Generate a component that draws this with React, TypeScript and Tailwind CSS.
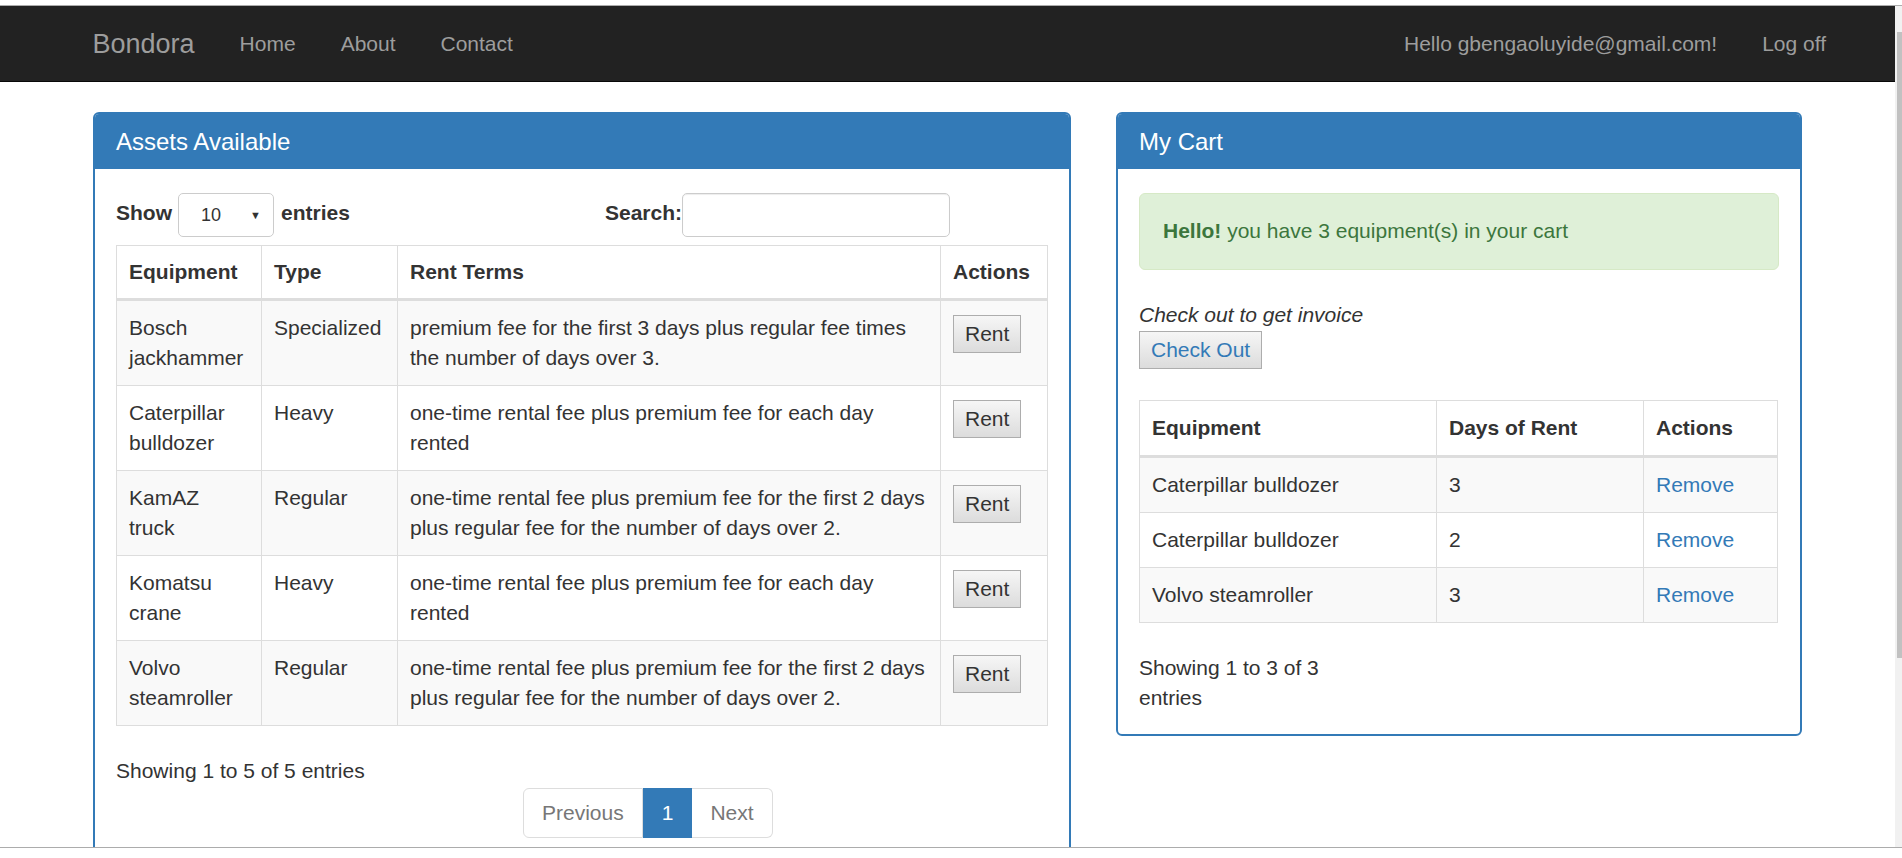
import React from 'react';

const assets = [
  { name: 'Bosch jackhammer', type: 'Specialized', terms: 'premium fee for the first 3 days plus regular fee times the number of days over 3.' },
  { name: 'Caterpillar bulldozer', type: 'Heavy', terms: 'one-time rental fee plus premium fee for each day rented' },
  { name: 'KamAZ truck', type: 'Regular', terms: 'one-time rental fee plus premium fee for the first 2 days plus regular fee for the number of days over 2.' },
  { name: 'Komatsu crane', type: 'Heavy', terms: 'one-time rental fee plus premium fee for each day rented' },
  { name: 'Volvo steamroller', type: 'Regular', terms: 'one-time rental fee plus premium fee for the first 2 days plus regular fee for the number of days over 2.' },
];

const cart = [
  { name: 'Caterpillar bulldozer', days: 3 },
  { name: 'Caterpillar bulldozer', days: 2 },
  { name: 'Volvo steamroller', days: 3 },
];

const Navbar = () => (
  <nav className="h-[76px] shrink-0 bg-[#222] border-b border-[#080808] flex items-center justify-between pl-[70px] pr-[46.5px] text-[#9d9d9d]">
    <div className="flex items-center">
      <a className="px-[22.5px] text-[27px] leading-[30px]">Bondora</a>
      {['Home', 'About', 'Contact'].map((l) => (
        <a key={l} className="px-[22.5px] text-[21px] leading-[30px]">{l}</a>
      ))}
    </div>
    <div className="flex items-center text-[21px] leading-[30px]">
      <a className="px-[22.5px]">Hello gbengaoluyide@gmail.com!</a>
      <a className="px-[22.5px]">Log off</a>
    </div>
  </nav>
);

const Panel = ({ title, width, children }: { title: string; width: string; children: React.ReactNode }) => (
  <div className={`${width} shrink-0 self-start rounded-[6px] border-2 border-[#337ab7] bg-white overflow-hidden`}>
    <div className="h-[55px] bg-[#337ab7] px-[21px] flex items-center text-white text-[24px] leading-[26px]">{title}</div>
    <div className="px-[21px] pt-[24px] pb-[21px]">{children}</div>
  </div>
);

const NativeButton = ({ label, className = '' }: { label: string; className?: string }) => (
  <button className={`h-[38px] px-[11px] border border-[#adadad] bg-gradient-to-b from-[#f6f6f6] to-[#dcdcdc] text-[21px] leading-[30px] ${className}`}>
    {label}
  </button>
);

const AssetsPanel = () => (
  <Panel title="Assets Available" width="w-[978px]">
    <div className="flex h-[44px] items-center font-bold">
      <div className="w-[489px] flex items-center">
        <span className="mb-[4px]">Show</span>
        <div className="ml-[6px] mr-[7px] w-[96px] h-[44px] rounded-[5px] border border-[#ccc] bg-white flex items-center justify-between pl-[22px] pr-[12px] font-normal text-[18px] text-[#333]">
          <span>10</span>
          <span className="text-[11px]">▼</span>
        </div>
        <span className="mb-[4px]">entries</span>
      </div>
      <span className="mb-[4px]">Search:</span>
      <div className="w-[268px] h-[44px] rounded-[5px] border border-[#ccc] shadow-[inset_0_1px_1px_rgba(0,0,0,0.075)] bg-white" />
    </div>

    <table className="mt-[8px] w-[931px] table-fixed">
      <colgroup>
        <col className="w-[145px]" />
        <col className="w-[136px]" />
        <col className="w-[543px]" />
        <col className="w-[107px]" />
      </colgroup>
      <thead>
        <tr>
          {['Equipment', 'Type', 'Rent Terms', 'Actions'].map((h) => (
            <th key={h} className="border border-[#ddd] border-b-[3px] px-[12px] py-[11px] text-left font-bold">{h}</th>
          ))}
        </tr>
      </thead>
      <tbody>
        {assets.map((a, i) => (
          <tr key={a.name} className={i % 2 === 0 ? 'bg-[#f9f9f9]' : 'bg-white'}>
            <td className="border border-[#ddd] px-[12px] py-[12px] align-top">{a.name}</td>
            <td className="border border-[#ddd] px-[12px] py-[12px] align-top">{a.type}</td>
            <td className="border border-[#ddd] px-[12px] py-[12px] align-top">{a.terms}</td>
            <td className="border border-[#ddd] px-[12px] pt-[14px] pb-[10px] align-top">
              <NativeButton label="Rent" className="text-[#333]" />
            </td>
          </tr>
        ))}
      </tbody>
    </table>

    <div className="mt-[30px]">Showing 1 to 5 of 5 entries</div>
    <div className="mt-[2px] ml-[407px] flex h-[50px]">
      <span className="px-[18px] py-[9px] border border-[#ddd] rounded-l-[6px] text-[#777] bg-white">Previous</span>
      <span className="px-[18px] py-[9px] border border-[#337ab7] bg-[#337ab7] text-white">1</span>
      <span className="px-[18px] py-[9px] border border-[#ddd] border-l-0 rounded-r-[6px] text-[#777] bg-white">Next</span>
    </div>
    <div className="h-[10px]" />
  </Panel>
);

const CartPanel = () => (
  <Panel title="My Cart" width="w-[686px]">
    <div className="rounded-[6px] border border-[#d6e9c6] bg-[#dff0d8] text-[#3c763d] px-[23px] pt-[22px] pb-[23px]">
      <strong>Hello!</strong> you have 3 equipment(s) in your cart
    </div>
    <div className="mt-[30px] italic">Check out to get invoice</div>
    <a className="block mt-[1px]">
      <NativeButton label="Check Out" className="text-[#337ab7]" />
    </a>

    <table className="mt-[31px] w-[638px] table-fixed">
      <colgroup>
        <col className="w-[297px]" />
        <col className="w-[207px]" />
        <col className="w-[134px]" />
      </colgroup>
      <thead>
        <tr>
          {['Equipment', 'Days of Rent', 'Actions'].map((h) => (
            <th key={h} className="border border-[#ddd] border-b-[3px] px-[12px] py-[12px] text-left font-bold">{h}</th>
          ))}
        </tr>
      </thead>
      <tbody>
        {cart.map((c, i) => (
          <tr key={i} className={i % 2 === 0 ? 'bg-[#f9f9f9]' : 'bg-white'}>
            <td className="border border-[#ddd] px-[12px] py-[12px]">{c.name}</td>
            <td className="border border-[#ddd] px-[12px] py-[12px]">{c.days}</td>
            <td className="border border-[#ddd] px-[12px] py-[12px] text-[#337ab7]">Remove</td>
          </tr>
        ))}
      </tbody>
    </table>

    <div className="mt-[30px] w-[240px]">Showing 1 to 3 of 3 entries</div>
  </Panel>
);

export default function App() {
  return (
    <div className="w-[1902px] h-[858px] bg-white overflow-hidden font-['Liberation_Sans',Arial,sans-serif] text-[21px] leading-[30px] text-[#333]">
      <div className="h-[5px]" />
      <div className="h-px bg-[#acacac]" />
      <div className="flex h-[841px]">
        <div className="flex-1 flex flex-col overflow-hidden">
          <Navbar />
          <main className="flex gap-[45px] pl-[93px] pt-[30px]">
            <AssetsPanel />
            <CartPanel />
          </main>
        </div>
        <div className="w-[7px] bg-[#f1f1f1] pt-[26px] pl-[2px]">
          <div className="h-[626px] w-[5px] bg-[#c1c1c1]" />
        </div>
      </div>
      <div className="h-px bg-[#acacac]" />
    </div>
  );
}
